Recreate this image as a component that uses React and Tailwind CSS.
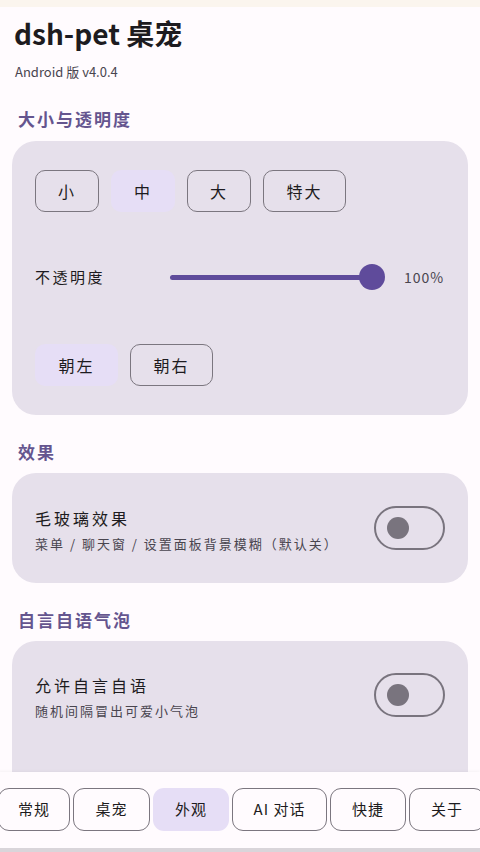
import { useState } from 'react';

const font = { fontFamily: '"Noto Sans CJK SC", "Noto Sans", sans-serif' };

const Chip = ({ label, active, w }) => (
  <button
    className={`h-[42px] ${w} rounded-[10px] text-[16px] tracking-[2px] text-[#1d1b20] flex items-center justify-center ${
      active ? 'bg-[#e6def6]' : 'border-[1.5px] border-[#7b767f]'
    }`}
  >
    {label}
  </button>
);

const Switch = () => (
  <div className="w-[71px] h-[44px] rounded-full border-[2.5px] border-[#79747e] flex items-center pl-[11px] shrink-0">
    <div className="w-[22px] h-[22px] rounded-full bg-[#79747e]" />
  </div>
);

const SectionTitle = ({ children }) => (
  <h2 className="px-[18px] text-[17px] tracking-[2px] font-bold text-[#65558f] leading-[24px]">{children}</h2>
);

export default function App() {
  const [tab] = useState('外观');
  const tabs = [
    { label: '常规', w: 'w-[72px]' },
    { label: '桌宠', w: 'w-[77px]' },
    { label: '外观', w: 'w-[76px]' },
    { label: 'AI 对话', w: 'w-[95px]' },
    { label: '快捷', w: 'w-[76px]' },
    { label: '关于', w: 'w-[76px]' },
  ];

  return (
    <div className="w-[480px] h-[852px] bg-[#fffbfe] flex flex-col overflow-hidden" style={font}>
      <div className="h-[7px] bg-[#fbf5ee] shrink-0" />
      <main className="flex-1 overflow-hidden">
        <h1 className="px-[14px] mt-[8px] text-[28px] font-bold leading-[36px] text-[#1d1b20]">dsh-pet 桌宠</h1>
        <p className="px-[15px] mt-[12px] text-[13px] leading-[18px] text-[#49454f]">Android 版 v4.0.4</p>

        <div className="mt-[26px]">
          <SectionTitle>大小与透明度</SectionTitle>
        </div>
        <section className="mx-[12px] mt-[10px] rounded-[24px] bg-[#e6e0eb] px-[23px] pt-[29px] pb-[29px]">
          <div className="flex gap-[12px]">
            <Chip label="小" w="w-[64px]" />
            <Chip label="中" w="w-[64px]" active />
            <Chip label="大" w="w-[64px]" />
            <Chip label="特大" w="w-[83px]" />
          </div>
          <div className="flex items-center mt-[45px] h-[40px]">
            <span className="w-[135px] text-[15px] tracking-[2.5px] text-[#1d1b20]">不透明度</span>
            <div className="relative w-[215px] h-[26px] flex items-center">
              <div className="w-[202px] h-[5px] rounded-full bg-[#5f4b9b]" />
              <div className="absolute left-[189px] top-0 w-[26px] h-[26px] rounded-full bg-[#5f4b9b]" />
            </div>
            <span className="ml-[19px] text-[14px] tracking-[1px] text-[#49454f]">100%</span>
          </div>
          <div className="flex gap-[12px] mt-[47px]">
            <Chip label="朝左" w="w-[83px]" active />
            <Chip label="朝右" w="w-[83px]" />
          </div>
        </section>

        <div className="mt-[25px]">
          <SectionTitle>效果</SectionTitle>
        </div>
        <section className="mx-[12px] mt-[9px] h-[110px] rounded-[24px] bg-[#e6e0eb] pl-[23px] pr-[23px] flex items-center justify-between">
          <div className="mt-[4px]">
            <div className="text-[16px] tracking-[3px] leading-[24px] text-[#1d1b20]">毛玻璃效果</div>
            <div className="text-[13px] tracking-[2px] leading-[20px] text-[#49454f] mt-[4px]">菜单 / 聊天窗 / 设置面板背景模糊（默认关）</div>
          </div>
          <Switch />
        </section>

        <div className="mt-[25px]">
          <SectionTitle>自言自语气泡</SectionTitle>
        </div>
        <section className="mx-[12px] mt-[9px] h-[160px] rounded-[24px] bg-[#e6e0eb] pl-[23px] pr-[23px] pt-[32px] flex justify-between">
          <div>
            <div className="text-[16px] tracking-[3px] leading-[24px] text-[#1d1b20]">允许自言自语</div>
            <div className="text-[13px] tracking-[2px] leading-[20px] text-[#49454f] mt-[4px]">随机间隔冒出可爱小气泡</div>
          </div>
          <Switch />
        </section>
      </main>

      <nav className="h-[76px] bg-[#fffbfe] shrink-0 flex items-center -ml-[2px] gap-[3px] pb-[2px] shadow-[0_-1px_3px_rgba(0,0,0,0.04)]">
        {tabs.map((t) => (
          <button
            key={t.label}
            className={`${t.w} h-[43px] shrink-0 rounded-[11px] text-[15px] tracking-[1px] text-[#1d1b20] flex items-center justify-center ${
              tab === t.label ? 'bg-[#e6def6]' : 'border-[1.5px] border-[#7b767f]'
            }`}
          >
            {t.label}
          </button>
        ))}
      </nav>
      <div className="h-[4px] bg-[#d9d5da] shrink-0" />
    </div>
  );
}
